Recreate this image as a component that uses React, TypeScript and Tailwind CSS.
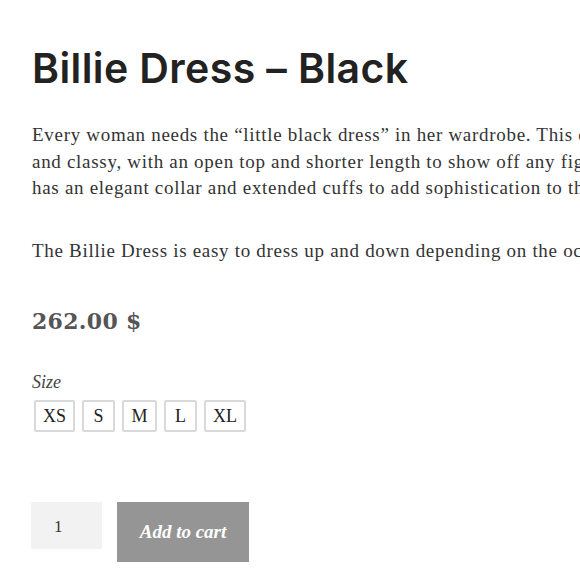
import React from 'react';

export default function App() {
  const sizes = [
    { label: 'XS', w: 'w-[41px]' },
    { label: 'S', w: 'w-[33px]' },
    { label: 'M', w: 'w-[35px]' },
    { label: 'L', w: 'w-[33px]' },
    { label: 'XL', w: 'w-[42px]' },
  ];

  const intro = [
    'Every woman needs the “little black dress” in her wardrobe. This one is simple',
    'and classy, with an open top and shorter length to show off any figure. It',
    'has an elegant collar and extended cuffs to add sophistication to the look.',
  ];

  return (
    <div className="w-[580px] h-[580px] overflow-hidden bg-white">
      <div className="pl-8 pt-[44px]">
        {/* Title */}
        <h1 className="font-['Inter',sans-serif] font-semibold text-[41px] leading-[48px] text-[#222] tracking-[0.4px] whitespace-nowrap">
          Billie Dress – Black
        </h1>

        {/* Description */}
        <div className="mt-[30px] font-['Liberation_Serif',serif] text-[19px] leading-[26.5px] tracking-[0.7px] text-[#333] whitespace-nowrap">
          <p>
            {intro.map((line, i) => (
              <span key={i} className="block">
                {line}
              </span>
            ))}
          </p>
          <p className="mt-[36px]">
            The Billie Dress is easy to dress up and down depending on the occasion.
          </p>
        </div>

        {/* Price */}
        <div className="mt-[43px] font-['DejaVu_Serif',serif] font-bold text-[22px] leading-[28px] tracking-[0.3px] text-[#555]">
          262.00 $
        </div>

        {/* Size picker */}
        <div className="mt-[37px]">
          <div className="font-['Liberation_Serif',serif] italic text-[18px] leading-[20px] text-[#444]">
            Size
          </div>
          <div className="mt-[8px] flex gap-[7px] pl-[2px]">
            {sizes.map((s) => (
              <button
                key={s.label}
                className={`${s.w} h-[32px] flex items-center justify-center rounded-[2px] border-2 border-[#d9d9d9] bg-white font-['Liberation_Serif',serif] text-[18px] text-[#222]`}
              >
                {s.label}
              </button>
            ))}
          </div>
        </div>

        {/* Quantity + add to cart */}
        <div className="mt-[70px] flex items-start gap-[15px] -ml-[1px]">
          <div className="w-[71px] h-[47px] bg-[#f2f2f2] pl-[23px] pt-[12px] font-['Liberation_Serif',serif] text-[17px] text-[#333]">
            1
          </div>
          <button className="w-[132px] h-[60px] bg-[#959595] text-white font-['Liberation_Serif',serif] italic font-bold text-[19px] flex items-center justify-center">
            Add to cart
          </button>
        </div>
      </div>
    </div>
  );
}
